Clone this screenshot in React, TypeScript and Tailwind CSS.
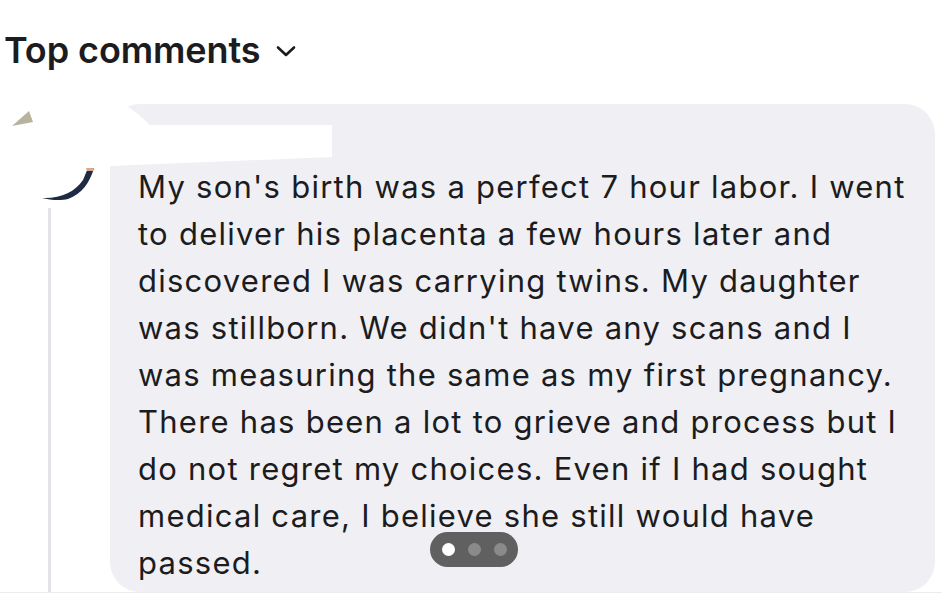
import React from "react";

const lines = [
  "My son's birth was a perfect 7 hour labor. I went",
  "to deliver his placenta a few hours later and",
  "discovered I was carrying twins. My daughter",
  "was stillborn. We didn't have any scans and I",
  "was measuring the same as my first pregnancy.",
  "There has been a lot to grieve and process but I",
  "do not regret my choices. Even if I had sought",
  "medical care, I believe she still would have",
  "passed.",
];

export default function App() {
  return (
    <div
      className="w-[942px] h-[600px] bg-white overflow-hidden relative text-[#1c1c1e]"
      style={{ fontFamily: "Inter, 'Liberation Sans', sans-serif" }}
    >
      {/* Header */}
      <div className="flex items-center h-[104px] pl-[4px] pb-[4px]">
        <span className="text-[36px] font-semibold tracking-[-0.1px] leading-none">Top comments</span>
        <svg className="ml-[16px] mt-[2px]" width="20" height="13" viewBox="0 0 20 13">
          <path d="M2 2.5 L10 10 L18 2.5" fill="none" stroke="#1c1c1e" strokeWidth="2.6" strokeLinecap="round" strokeLinejoin="round" />
        </svg>
      </div>

      {/* Comment row */}
      <div className="flex h-[488px] pr-[7px]">
        <div className="w-[110px] relative shrink-0">
          <div className="absolute left-[48px] top-[104px] bottom-0 w-[3px] bg-[#e4e4e8]" />
        </div>
        <div className="flex-1 bg-[#f0f0f4] rounded-[30px] pl-[28px] pt-[59px]">
          <div className="text-[31px] leading-[47px] tracking-[1.25px]">
            {lines.map((l, i) => (
              <div key={i} className="whitespace-nowrap">{l}</div>
            ))}
          </div>
        </div>
      </div>
      <div className="h-[8px] bg-white border-t border-[#ececee]" />

      {/* redaction overlay */}
      <svg className="absolute left-0 top-[100px]" width="340" height="70" viewBox="0 0 340 70">
        <polygon points="0,0 125,0 127,6 138,14 150,25 332,25 332,57 110,66 0,66" fill="#ffffff" />
        <polygon points="0,0 118,0 118,66 0,66" fill="#ffffff" />
      </svg>

      {/* Avatar fragments */}
      <svg className="absolute left-0 top-[100px]" width="110" height="120" viewBox="0 0 110 120">
        <polygon points="12,26 29,11 33,22" fill="#b8b39e" />
        <path d="M42,98 C60,99 75,92 83,80 L88,68 L94,68 C90,82 82,94 68,99 C60,101 50,100 42,98 Z" fill="#1f2a44" />
        <path d="M86,68 L94,68 L93,71 L87,71 Z" fill="#d9a98a" />
      </svg>

      {/* Pagination pill */}
      <div className="absolute left-[430px] top-[532px] w-[88px] h-[35px] rounded-full bg-[#606060] flex items-center justify-center gap-[13px]">
        <span className="w-[13px] h-[13px] rounded-full bg-white" />
        <span className="w-[13px] h-[13px] rounded-full bg-[#8a8a8a]" />
        <span className="w-[13px] h-[13px] rounded-full bg-[#8a8a8a]" />
      </div>
    </div>
  );
}
